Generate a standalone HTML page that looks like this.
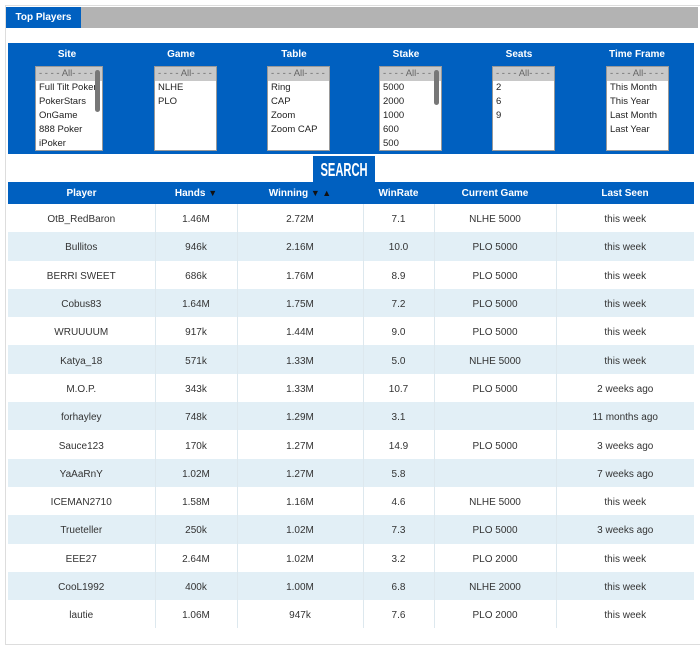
<!DOCTYPE html>
<html><head><meta charset="utf-8"><style>
*{margin:0;padding:0;box-sizing:border-box}
body{width:700px;height:628px;overflow:hidden;background:#fff;font-family:"Liberation Sans",sans-serif;font-size:10px;color:#333;position:relative}
.frame{position:absolute;left:5px;top:5px;width:696px;height:640px;border:1px solid #ddd}
.tabbar{position:absolute;left:6px;top:7px;width:692px;height:21px;background:#b3b3b3}
.tab{position:absolute;left:6px;top:7px;width:75px;height:21px;background:#0060c0;color:#fff;font-weight:bold;font-size:10px;line-height:21px;text-align:center}
.panel{position:absolute;left:8px;top:43px;width:686px;height:111px;background:#0060c0}
.f{position:absolute;top:0;width:110px;text-align:center;color:#fff;font-weight:bold;font-size:10px}
.f .t{position:absolute;top:6px;width:100%;text-align:center}
.box{position:absolute;top:23px;height:85px;background:#fff;border:1px solid #999;text-align:left;color:#222;font-weight:normal;font-size:9.5px;line-height:14px;overflow:hidden}
.box div{padding-left:3px;white-space:nowrap}
.box .a{background:#c8c8c8;color:#666}
.sb{position:absolute;right:2px;top:3px;width:5px;height:42px;background:#777;border-radius:3px}
.search{position:absolute;left:313px;top:156px;width:62px;height:26px;background:#0060c0;color:#fff;font-weight:bold;font-size:18px;line-height:28px;text-align:center;overflow:hidden;white-space:nowrap}
.search span{display:inline-block;transform:scaleX(0.62);transform-origin:center;margin:0 -20px}
table{position:absolute;left:8px;top:182px;width:686px;border-collapse:collapse;table-layout:fixed}
th{background:#0060c0;color:#fff;font-weight:bold;font-size:10px;height:22px;text-align:center;padding-top:1px}
td{height:28.3px;text-align:center;border-right:1px solid #dde8ee;font-size:10px;padding-top:3px}
td:last-child{border-right:none}
tr:nth-child(odd) td{background:#e2eff6}
.ar{font-size:9px;color:#111}
</style></head><body>
<div class="frame"></div>
<div class="tabbar"></div>
<div class="tab">Top Players</div>
<div class="panel">
 <div class="f" style="left:4px"><div class="t">Site</div><div class="box" style="left:23px;width:68px"><div class="a">- - - - All- - - -</div><div>Full Tilt Poker</div><div>PokerStars</div><div>OnGame</div><div>888 Poker</div><div>iPoker</div><span class="sb"></span></div></div>
 <div class="f" style="left:118px"><div class="t">Game</div><div class="box" style="left:28px;width:63px"><div class="a">- - - - All- - - -</div><div>NLHE</div><div>PLO</div></div></div>
 <div class="f" style="left:231px"><div class="t">Table</div><div class="box" style="left:28px;width:63px"><div class="a">- - - - All- - - -</div><div>Ring</div><div>CAP</div><div>Zoom</div><div>Zoom CAP</div></div></div>
 <div class="f" style="left:343px"><div class="t">Stake</div><div class="box" style="left:28px;width:63px"><div class="a">- - - - All- - - -</div><div>5000</div><div>2000</div><div>1000</div><div>600</div><div>500</div><span class="sb" style="height:35px"></span></div></div>
 <div class="f" style="left:456px"><div class="t">Seats</div><div class="box" style="left:28px;width:63px"><div class="a">- - - - All- - - -</div><div>2</div><div>6</div><div>9</div></div></div>
 <div class="f" style="left:574px"><div class="t">Time Frame</div><div class="box" style="left:24px;width:63px"><div class="a">- - - - All- - - -</div><div>This Month</div><div>This Year</div><div>Last Month</div><div>Last Year</div></div></div>
</div>
<div class="search"><span>SEARCH</span></div>
<table>
<colgroup><col style="width:147px"><col style="width:82px"><col style="width:126px"><col style="width:71px"><col style="width:122px"><col style="width:138px"></colgroup>
<tr><th>Player</th><th>Hands <span class="ar">▼</span></th><th>Winning <span class="ar">▼ ▲</span></th><th>WinRate</th><th>Current Game</th><th>Last Seen</th></tr>
<tr><td>OtB_RedBaron</td><td>1.46M</td><td>2.72M</td><td>7.1</td><td>NLHE 5000</td><td>this week</td></tr>
<tr><td>Bullitos</td><td>946k</td><td>2.16M</td><td>10.0</td><td>PLO 5000</td><td>this week</td></tr>
<tr><td>BERRI SWEET</td><td>686k</td><td>1.76M</td><td>8.9</td><td>PLO 5000</td><td>this week</td></tr>
<tr><td>Cobus83</td><td>1.64M</td><td>1.75M</td><td>7.2</td><td>PLO 5000</td><td>this week</td></tr>
<tr><td>WRUUUUM</td><td>917k</td><td>1.44M</td><td>9.0</td><td>PLO 5000</td><td>this week</td></tr>
<tr><td>Katya_18</td><td>571k</td><td>1.33M</td><td>5.0</td><td>NLHE 5000</td><td>this week</td></tr>
<tr><td>M.O.P.</td><td>343k</td><td>1.33M</td><td>10.7</td><td>PLO 5000</td><td>2 weeks ago</td></tr>
<tr><td>forhayley</td><td>748k</td><td>1.29M</td><td>3.1</td><td></td><td>11 months ago</td></tr>
<tr><td>Sauce123</td><td>170k</td><td>1.27M</td><td>14.9</td><td>PLO 5000</td><td>3 weeks ago</td></tr>
<tr><td>YaAaRnY</td><td>1.02M</td><td>1.27M</td><td>5.8</td><td></td><td>7 weeks ago</td></tr>
<tr><td>ICEMAN2710</td><td>1.58M</td><td>1.16M</td><td>4.6</td><td>NLHE 5000</td><td>this week</td></tr>
<tr><td>Trueteller</td><td>250k</td><td>1.02M</td><td>7.3</td><td>PLO 5000</td><td>3 weeks ago</td></tr>
<tr><td>EEE27</td><td>2.64M</td><td>1.02M</td><td>3.2</td><td>PLO 2000</td><td>this week</td></tr>
<tr><td>CooL1992</td><td>400k</td><td>1.00M</td><td>6.8</td><td>NLHE 2000</td><td>this week</td></tr>
<tr><td>lautie</td><td>1.06M</td><td>947k</td><td>7.6</td><td>PLO 2000</td><td>this week</td></tr>
</table>
</body></html>
